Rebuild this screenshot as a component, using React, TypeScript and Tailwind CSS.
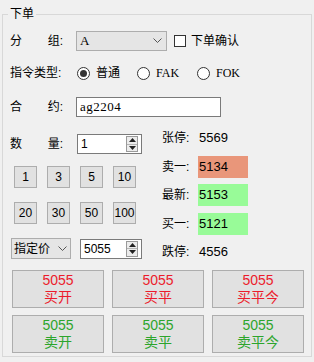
import React from 'react'

const sans = "font-['Liberation_Sans','Noto_Sans_CJK_SC',sans-serif]"
const serif = "font-['Liberation_Serif','Noto_Sans_CJK_SC',serif]"

function Chevron() {
  return (
    <svg width="9" height="6" viewBox="0 0 9 6" className="shrink-0">
      <polyline points="0.5,0.5 4.5,4.5 8.5,0.5" fill="none" stroke="#555" strokeWidth="1" />
    </svg>
  )
}

function SpinArrows() {
  return (
    <div className="absolute right-[3px] top-[1px] flex h-[16px] w-[12px] flex-col border border-[#9a9a9a] bg-[#ececec]">
      <div className="flex flex-1 items-center justify-center border-b border-[#b5b5b5]">
        <svg width="7" height="4" viewBox="0 0 7 4">
          <polygon points="0,4 3.5,0 7,4" fill="#222" />
        </svg>
      </div>
      <div className="flex flex-1 items-center justify-center">
        <svg width="7" height="4" viewBox="0 0 7 4">
          <polygon points="0,0 3.5,4 7,0" fill="#222" />
        </svg>
      </div>
    </div>
  )
}

function Spin({ value, w }: { value: string; w: string }) {
  return (
    <div className={`relative flex h-[20px] items-center border border-[#7a7a7a] bg-white pl-[3px] text-[12px] ${w}`}>
      {value}
      <SpinArrows />
    </div>
  )
}

function Label({ a, b }: { a: string; b: string }) {
  return (
    <div className="flex w-[53px] justify-between">
      <span>{a}</span>
      <span>{b}</span>
    </div>
  )
}

function Radio({ label, checked, font }: { label: string; checked?: boolean; font?: string }) {
  return (
    <div className="flex w-[60px] items-center gap-[6px]">
      <div className="flex h-[13px] w-[13px] items-center justify-center rounded-full border border-[#333] bg-white">
        {checked && <div className="h-[7px] w-[7px] rounded-full bg-[#333]" />}
      </div>
      <span className={font}>{label}</span>
    </div>
  )
}

function QtyBtn({ n }: { n: string }) {
  return (
    <div className="flex h-[22px] w-[23px] items-center justify-center border border-[#adadad] bg-[#e1e1e1] text-[12px]">
      {n}
    </div>
  )
}

function PriceRow({ label, value, bg }: { label: string; value: string; bg?: string }) {
  return (
    <div className="flex h-[22px] items-center">
      <span className="w-[36px]">{label}</span>
      <div className={`flex h-[22px] w-[50px] items-center pl-[1px] text-[13px] ${bg ?? ''}`}>{value}</div>
    </div>
  )
}

function OrderBtn({ price, text, color }: { price: string; text: string; color: string }) {
  return (
    <div className={`flex h-[38px] flex-col items-center justify-center border border-[#adadad] bg-[#e1e1e1] text-[14px] leading-[17px] ${color}`}>
      <span>{price}</span>
      <span>{text}</span>
    </div>
  )
}

export default function App() {
  return (
    <div className={`h-[362px] w-[314px] overflow-hidden bg-[#f0f0f0] pt-[6px] text-[12px] text-black ${sans}`}>
      <fieldset className="mx-[2px] border border-[#d8d8d8] pb-[3px] pl-[7px]">
        <legend className="ml-[-2px] px-[2px] text-[12px] leading-[16px]">下单</legend>

        <div className="mt-[9px] flex h-[20px] items-center">
          <Label a="分" b="组:" />
          <div className="ml-[13px] flex h-[20px] w-[91px] items-center justify-between border border-[#adadad] bg-[#e5e5e5] pl-[3px] pr-[4px]">
            <span className={`${serif} text-[13px]`}>A</span>
            <Chevron />
          </div>
          <div className="ml-[7px] h-[12px] w-[12px] border border-[#333] bg-white" />
          <span className="ml-[5px]">下单确认</span>
        </div>

        <div className="mt-[12px] flex h-[20px] items-center">
          <span className="w-[67px]">指令类型:</span>
          <Radio label="普通" checked />
          <Radio label="FAK" font={`${serif} text-[12px]`} />
          <Radio label="FOK" font={`${serif} text-[12px]`} />
        </div>

        <div className="mt-[14px] flex h-[20px] items-center">
          <Label a="合" b="约:" />
          <div className={`ml-[13px] flex h-[20px] w-[145px] items-center border border-[#7a7a7a] bg-white pl-[3px] text-[13px] tracking-[0.5px] ${serif}`}>
            ag2204
          </div>
        </div>

        <div className="flex">
          <div className="w-[152px]">
            <div className="mt-[17px] flex h-[20px] items-center">
              <Label a="数" b="量:" />
              <div className="ml-[14px]">
                <Spin value="1" w="w-[65px]" />
              </div>
            </div>
            <div className="mt-[12px] flex gap-[10px] pl-[4px]">
              {['1', '3', '5', '10'].map(n => <QtyBtn key={n} n={n} />)}
            </div>
            <div className="mt-[14px] flex gap-[10px] pl-[4px]">
              {['20', '30', '50', '100'].map(n => <QtyBtn key={n} n={n} />)}
            </div>
            <div className="mt-[14px] flex items-center">
              <div className="ml-[1px] flex h-[21px] w-[60px] items-center justify-between border border-[#adadad] bg-[#e5e5e5] pl-[2px] pr-[3px]">
                <span>指定价</span>
                <Chevron />
              </div>
              <div className="ml-[9px]">
                <Spin value="5055" w="w-[62px]" />
              </div>
            </div>
          </div>

          <div className="mt-[10px] flex flex-col gap-[6.5px]">
            <PriceRow label="张停:" value="5569" />
            <PriceRow label="卖一:" value="5134" bg="bg-[#e9967a]" />
            <PriceRow label="最新:" value="5153" bg="bg-[#98fb98]" />
            <PriceRow label="买一:" value="5121" bg="bg-[#98fb98]" />
            <PriceRow label="跌停:" value="4556" />
          </div>
        </div>

        <div className="ml-[2px] mt-[7px] grid w-[292px] grid-cols-3 gap-x-[8px] gap-y-[7px]">
          <OrderBtn price="5055" text="买开" color="text-[#ec1c2c]" />
          <OrderBtn price="5055" text="买平" color="text-[#ec1c2c]" />
          <OrderBtn price="5055" text="买平今" color="text-[#ec1c2c]" />
          <OrderBtn price="5055" text="卖开" color="text-[#2ca52c]" />
          <OrderBtn price="5055" text="卖平" color="text-[#2ca52c]" />
          <OrderBtn price="5055" text="卖平今" color="text-[#2ca52c]" />
        </div>
      </fieldset>
    </div>
  )
}
